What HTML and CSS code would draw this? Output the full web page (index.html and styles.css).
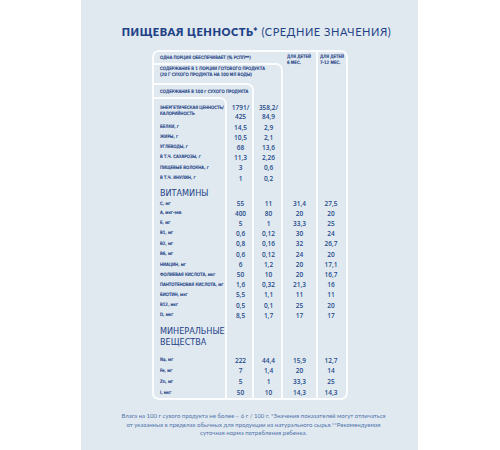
FILE: index.html
```html
<!DOCTYPE html>
<html lang="ru">
<head>
<meta charset="utf-8">
<link rel="stylesheet" href="styles.css">
</head>
<body>
<div class="panel">
  <h1 class="title"><b>ПИЩЕВАЯ ЦЕННОСТЬ*</b> (СРЕДНИЕ ЗНАЧЕНИЯ)</h1>
  <div class="table">
    <div class="box box1"></div>
    <div class="box box2"></div>
    <div class="box box3"></div>
    <div class="div5"></div>

    <div class="h h1">ОДНА ПОРЦИЯ ОБЕСПЕЧИВАЕТ (% РСПП**)</div>
    <div class="h hc4">ДЛЯ ДЕТЕЙ<br>6 МЕС.</div>
    <div class="h hc5">ДЛЯ ДЕТЕЙ<br>7-12 МЕС.</div>
    <div class="h h2">СОДЕРЖАНИЕ В 1 ПОРЦИИ ГОТОВОГО ПРОДУКТА<br>(20 Г СУХОГО ПРОДУКТА НА 100 МЛ ВОДЫ)</div>
    <div class="h h3">СОДЕРЖАНИЕ В 100 г СУХОГО ПРОДУКТА</div>

    <div class="row r4 energy"><span class="l">ЭНЕРГЕТИЧЕСКАЯ ЦЕННОСТЬ/<br>КАЛОРИЙНОСТЬ</span><span class="n c2">1791/<br>425</span><span class="n c3">358,2/<br>84,9</span></div>
    <div class="row r5"><span class="l">БЕЛКИ, г</span><span class="n c2">14,5</span><span class="n c3">2,9</span></div>
    <div class="row r6"><span class="l">ЖИРЫ, г</span><span class="n c2">10,5</span><span class="n c3">2,1</span></div>
    <div class="row r7"><span class="l">УГЛЕВОДЫ, г</span><span class="n c2">68</span><span class="n c3">13,6</span></div>
    <div class="row r8"><span class="l">В Т.Ч. САХАРОЗЫ, г</span><span class="n c2">11,3</span><span class="n c3">2,26</span></div>
    <div class="row r9"><span class="l">ПИЩЕВЫЕ ВОЛОКНА, г</span><span class="n c2">3</span><span class="n c3">0,6</span></div>
    <div class="row r10"><span class="l">В Т.Ч. ИНУЛИН, г</span><span class="n c2">1</span><span class="n c3">0,2</span></div>
    <div class="row r11"><span class="sec">ВИТАМИНЫ</span></div>
    <div class="row r12"><span class="l">С, мг</span><span class="n c2">55</span><span class="n c3">11</span><span class="n c4">31,4</span><span class="n c5">27,5</span></div>
    <div class="row r13"><span class="l">А, мкг-экв</span><span class="n c2">400</span><span class="n c3">80</span><span class="n c4">20</span><span class="n c5">20</span></div>
    <div class="row r14"><span class="l">Е, мг</span><span class="n c2">5</span><span class="n c3">1</span><span class="n c4">33,3</span><span class="n c5">25</span></div>
    <div class="row r15"><span class="l">В1, мг</span><span class="n c2">0,6</span><span class="n c3">0,12</span><span class="n c4">30</span><span class="n c5">24</span></div>
    <div class="row r16"><span class="l">В2, мг</span><span class="n c2">0,8</span><span class="n c3">0,16</span><span class="n c4">32</span><span class="n c5">26,7</span></div>
    <div class="row r17"><span class="l">В6, мг</span><span class="n c2">0,6</span><span class="n c3">0,12</span><span class="n c4">24</span><span class="n c5">20</span></div>
    <div class="row r18"><span class="l">НИАЦИН, мг</span><span class="n c2">6</span><span class="n c3">1,2</span><span class="n c4">20</span><span class="n c5">17,1</span></div>
    <div class="row r19"><span class="l">ФОЛИЕВАЯ КИСЛОТА, мкг</span><span class="n c2">50</span><span class="n c3">10</span><span class="n c4">20</span><span class="n c5">16,7</span></div>
    <div class="row r20"><span class="l">ПАНТОТЕНОВАЯ КИСЛОТА, мг</span><span class="n c2">1,6</span><span class="n c3">0,32</span><span class="n c4">21,3</span><span class="n c5">16</span></div>
    <div class="row r21"><span class="l">БИОТИН, мкг</span><span class="n c2">5,5</span><span class="n c3">1,1</span><span class="n c4">11</span><span class="n c5">11</span></div>
    <div class="row r22"><span class="l">В12, мкг</span><span class="n c2">0,5</span><span class="n c3">0,1</span><span class="n c4">25</span><span class="n c5">20</span></div>
    <div class="row r23"><span class="l">D, мкг</span><span class="n c2">8,5</span><span class="n c3">1,7</span><span class="n c4">17</span><span class="n c5">17</span></div>
    <div class="row r24"><span class="sec sec2">МИНЕРАЛЬНЫЕ<br>ВЕЩЕСТВА</span></div>
    <div class="row r25"><span class="l">Na, мг</span><span class="n c2">222</span><span class="n c3">44,4</span><span class="n c4">15,9</span><span class="n c5">12,7</span></div>
    <div class="row r26"><span class="l">Fe, мг</span><span class="n c2">7</span><span class="n c3">1,4</span><span class="n c4">20</span><span class="n c5">14</span></div>
    <div class="row r27"><span class="l">Zn, мг</span><span class="n c2">5</span><span class="n c3">1</span><span class="n c4">33,3</span><span class="n c5">25</span></div>
    <div class="row r28"><span class="l">I, мкг</span><span class="n c2">50</span><span class="n c3">10</span><span class="n c4">14,3</span><span class="n c5">14,3</span></div>
  </div>
  <p class="note">Влага на 100 г сухого продукта не более – 6 г / 100 г. *Значения показателей могут отличаться<br>от указанных в пределах обычных для продукции из натурального сырья.**Рекомендуемая<br>суточная норма потребления ребенка.</p>
</div>
</body>
</html>
```
FILE: styles.css
```css
html, body {
  margin: 0;
  padding: 0;
  background: #ffffff;
}

.panel {
  margin-left: 81px;
  width: 337px;
  height: 450px;
  background: #dfe9ef;
  overflow: hidden;
  color: #264a8c;
}

.title {
  margin: 25px 0 0 0;
  padding-left: 14px;
  height: 14px;
  line-height: 14px;
  text-align: center;
  font-family: "Lato", "DejaVu Sans", sans-serif;
  font-size: 11px;
  font-weight: 400;
  letter-spacing: 0.55px;
  color: #1f4287;
  white-space: nowrap;
}

.title b {
  font-weight: 800;
}

.table {
  margin: 11px 0 0 71px;
  width: 196px;
  box-sizing: border-box;
  border: 2px solid rgba(255, 255, 255, 0.85);
  border-radius: 7px;
  display: grid;
  grid-template-columns: 73px 27px 29px 33px 30px;
  grid-template-rows: 11px 20px 14px 25px 10px 10px 10px 10px 11px 10px 16px 9px 10px 10px 10px 11px 10px 10.5px 9.5px 10.5px 10.5px 10px 10px 35px 10px 11px 11px 11px;
}

.box {
  border-top: 2px solid rgba(255, 255, 255, 0.85);
  border-right: 2px solid rgba(255, 255, 255, 0.85);
  border-top-right-radius: 7px;
}

.box1 { grid-column: 1 / 4; grid-row: 2 / -1; }
.box2 { grid-column: 1 / 3; grid-row: 3 / -1; }
.box3 { grid-column: 1 / 2; grid-row: 4 / -1; }

.div5 {
  grid-column: 5;
  grid-row: 1 / -1;
  border-left: 2px solid rgba(255, 255, 255, 0.85);
}

.h, .l {
  font-family: "DejaVu Sans Condensed", "DejaVu Sans", sans-serif;
  font-size: 4.5px;
  line-height: 5.5px;
  white-space: nowrap;
  color: #1f4287;
  -webkit-text-stroke: 0.2px #1f4287;
}

.h1 { grid-column: 1 / 4; grid-row: 1; padding-left: 6px; align-self: center; }
.hc4 { grid-column: 4; grid-row: 1 / 3; padding: 2px 0 0 4px; }
.hc5 { grid-column: 5; grid-row: 1 / 3; padding: 2px 0 0 4px; }
.h2 { grid-column: 1 / 4; grid-row: 2; padding: 3px 0 0 6px; line-height: 6px; }
.h3 { grid-column: 1 / 3; grid-row: 3; padding: 6px 0 0 6px; line-height: 6px; }

.row { display: contents; }

.l {
  grid-column: 1;
  padding-left: 6px;
  align-self: center;
}

.n {
  font-family: "Open Sans", "DejaVu Sans", sans-serif;
  font-size: 6.5px;
  font-weight: 600;
  line-height: 9px;
  text-align: center;
  align-self: center;
}

.c2 { grid-column: 2; }
.c3 { grid-column: 3; }
.c4 { grid-column: 4; }
.c5 { grid-column: 5; }

.energy .l { padding-top: 2px; }
.energy .n { padding-top: 4px; }

.sec {
  grid-column: 1 / 3;
  padding-left: 6px;
  font-family: "DejaVu Sans Condensed", "DejaVu Sans", sans-serif;
  font-size: 9px;
  line-height: 11px;
  align-self: end;
  white-space: nowrap;
  color: #1f4287;
}

.sec2 {
  align-self: start;
  padding-top: 6px;
}

.r4 > * { grid-row: 4; }
.r5 > * { grid-row: 5; }
.r6 > * { grid-row: 6; }
.r7 > * { grid-row: 7; }
.r8 > * { grid-row: 8; }
.r9 > * { grid-row: 9; }
.r10 > * { grid-row: 10; }
.r11 > * { grid-row: 11; }
.r12 > * { grid-row: 12; }
.r13 > * { grid-row: 13; }
.r14 > * { grid-row: 14; }
.r15 > * { grid-row: 15; }
.r16 > * { grid-row: 16; }
.r17 > * { grid-row: 17; }
.r18 > * { grid-row: 18; }
.r19 > * { grid-row: 19; }
.r20 > * { grid-row: 20; }
.r21 > * { grid-row: 21; }
.r22 > * { grid-row: 22; }
.r23 > * { grid-row: 23; }
.r24 > * { grid-row: 24; }
.r25 > * { grid-row: 25; }
.r26 > * { grid-row: 26; }
.r27 > * { grid-row: 27; }
.r28 > * { grid-row: 28; }

.note {
  margin: 12px 0 0 0;
  padding-left: 8px;
  text-align: center;
  font-family: "Lato", "DejaVu Sans", sans-serif;
  font-size: 6px;
  line-height: 8.5px;
  color: #5272ad;
  white-space: nowrap;
}
```
